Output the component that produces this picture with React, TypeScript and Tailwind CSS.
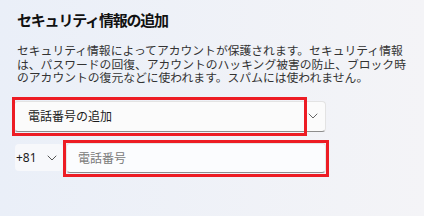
import React from 'react';

const jp = { fontFamily: '"Noto Sans CJK JP", "Noto Sans", sans-serif' };

function Chevron({ className }: { className?: string }) {
  return (
    <svg width="10" height="6" viewBox="0 0 10 6" fill="none" className={className}>
      <path d="M1 1l4 4 4-4" stroke="currentColor" strokeWidth="1" strokeLinecap="round" strokeLinejoin="round" />
    </svg>
  );
}

export default function App() {
  return (
    <div
      className="w-[424px] h-[216px] overflow-hidden bg-gradient-to-r from-[#eaeff8] to-[#f4f4f7] text-[#1b1b1b]"
      style={jp}
    >
      <div className="pt-[10px] pl-[17px]">
        <h1 className="text-[15px] leading-[20px] font-bold tracking-[-1.2px] text-[#111]">
          セキュリティ情報の追加
        </h1>
        <p className="mt-[13px] w-[396px] text-[11.8px] leading-[13.5px] text-[#333]">
          セキュリティ情報によってアカウントが保護されます。セキュリティ情報は、パスワードの回復、アカウントのハッキング被害の防止、ブロック時のアカウントの復元などに使われます。スパムには使われません。
        </p>
      </div>

      {/* method dropdown */}
      <div className="relative ml-[14px] mt-[17px] w-[312px] h-[31px]">
        <div className="flex items-center justify-between h-full rounded-[4px] bg-[#fbfbfb] border border-[#e3e3e3] border-b-[#8d8d8d] pl-[13px] pr-[7px]">
          <span className="text-[12px] text-[#1b1b1b]">電話番号の追加</span>
          <Chevron className="text-[#666]" />
        </div>
        <div className="absolute left-[-2px] top-[-4px] w-[295px] h-[39px] border-[3px] border-[#ed1c24]" />
      </div>

      {/* phone number row */}
      <div className="flex items-center ml-[15px] mt-[11px]">
        <div className="flex items-center justify-between w-[48px] h-[27px] rounded-[4px] bg-[#f7f8fb] pl-[1px] pr-[6px]">
          <span className="text-[12px] text-[#1b1b1b]" style={{ fontFamily: '"Noto Sans", sans-serif' }}>+81</span>
          <Chevron className="text-[#555]" />
        </div>
        <div className="relative ml-[3px] w-[260px] h-[30px]">
          <div className="flex items-center h-full rounded-[4px] bg-[#fbfcfe] border border-[#e6e6e6] border-b-[#8d8d8d] pl-[11px]">
            <span className="text-[12px] text-[#7a7a7a]">電話番号</span>
          </div>
          <div className="absolute left-[-3px] top-[-3px] right-[-3px] bottom-[-4px] border-[3px] border-[#ed1c24]" />
        </div>
      </div>
    </div>
  );
}
